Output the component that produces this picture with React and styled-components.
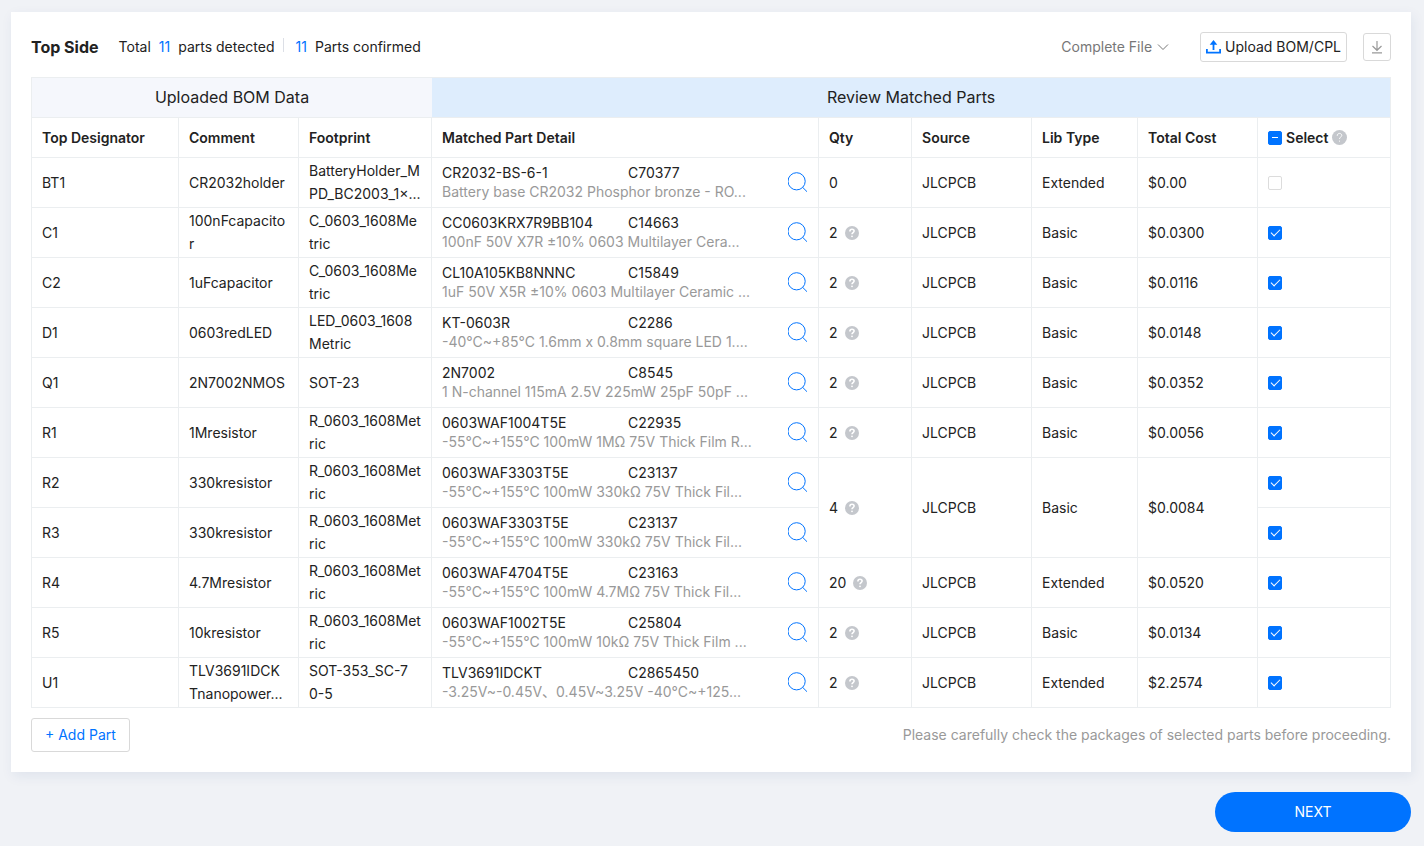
import { useState } from "react"
import styled, { createGlobalStyle } from "styled-components"

const GlobalStyle = createGlobalStyle`
  * {
    box-sizing: border-box;
  }

  body {
    margin: 0;
    background: #f0f2f6;
    color: #222222;
    font-family: Inter, "Noto Sans CJK SC", sans-serif;
    font-size: 14px;
    line-height: 20px;
  }

  button, select, input {
    font: inherit;
  }
`

const Page = styled.main`
  max-width: 1424px;
  margin: 0 auto;
  padding: 12px 13px 14px 11px;
`

const Panel = styled.section`
  background: #ffffff;
  padding: 20px;
  box-shadow: 2px 4px 12px rgba(30, 70, 130, 0.08);
`

const PanelHeader = styled.header`
  display: flex;
  align-items: center;
  margin-bottom: 15px;
`

const Title = styled.h1`
  margin: 0 20px 0 0;
  font-size: 16px;
  font-weight: 700;
`

const Summary = styled.div`
  display: flex;
  align-items: center;
  gap: 8px;
  flex: 1;
`

const Count = styled.span`
  color: #0073ff;
`

const Divider = styled.span`
  width: 1px;
  height: 14px;
  margin-right: 4px;
  margin-bottom: 4px;
  background: #dcdfe6;
`

const FileMenu = styled.label`
  display: flex;
  align-items: center;
  gap: 5px;
  margin-right: 31px;
  color: #777777;

  select {
    appearance: none;
    field-sizing: content;
    border: none;
    padding: 0;
    background: none;
    color: inherit;
    cursor: pointer;
  }
`

const OutlineButton = styled.button`
  display: flex;
  align-items: center;
  justify-content: center;
  gap: 4px;
  height: ${({ $height }) => $height}px;
  padding: 0 ${({ $pad }) => $pad}px;
  border: 1px solid #d9d9d9;
  border-radius: 3px;
  background: #ffffff;
  color: ${({ $color }) => $color || "#222222"};
  white-space: nowrap;
  cursor: pointer;
`

const Toolbar = styled.div`
  display: flex;
  align-items: center;
  gap: 16px;
`

const Table = styled.table`
  width: 100%;
  table-layout: fixed;
  border-collapse: separate;
  border-spacing: 0;
  border-top: 1px solid #ebeef0;
  border-left: 1px solid #ebeef0;
`

const Col = styled.col`
  width: ${({ $width }) => $width}px;
`

const GroupHead = styled.th`
  height: 40px;
  padding: 0 10px 1px;
  border-bottom: 1px solid #ebeef0;
  border-right: ${({ $last }) => ($last ? "1px solid #ebeef0" : "none")};
  background: ${({ $matched }) => ($matched ? "#deedfd" : "#f5f7fc")};
  font-size: 16px;
  font-weight: 400;
  text-align: center;
`

const HeadCell = styled.th`
  height: 40px;
  padding: 0 10px;
  border-right: 1px solid #ebeef0;
  border-bottom: 1px solid #ebeef0;
  font-weight: 600;
  text-align: left;
`

const Cell = styled.td`
  height: 50px;
  padding: 0 10px;
  border-right: 1px solid #ebeef0;
  border-bottom: 1px solid #ebeef0;
  line-height: 23px;
`

const WrapCell = styled(Cell)`
  padding-bottom: 1px;
  white-space: pre-line;
  word-break: break-all;
`

const MatchCell = styled(Cell)`
  padding-bottom: 1px;
  line-height: 19px;
`

const Inline = styled.div`
  display: flex;
  align-items: center;
  gap: ${({ $gap }) => $gap}px;
`

const Match = styled.div`
  display: flex;
  align-items: center;
  gap: 36px;
`

const MatchText = styled.div`
  flex: 1;
  min-width: 0;
`

const PartLine = styled.div`
  display: grid;
  grid-template-columns: 3fr 2fr;
`

const Description = styled.div`
  overflow: hidden;
  color: #999999;
  white-space: nowrap;
`

const IconButton = styled.button`
  display: flex;
  padding: 0;
  border: none;
  background: none;
  cursor: pointer;
`

const Checkbox = styled.input.attrs({ type: "checkbox" })`
  appearance: none;
  display: grid;
  place-content: center;
  width: 14px;
  height: 14px;
  margin: 0;
  border: 1px solid #dcdcdc;
  border-radius: 2px;
  background: #ffffff;
  cursor: pointer;

  &:checked, &:indeterminate {
    border-color: #0073ff;
    background: #0073ff;
  }

  &:checked::after {
    content: "";
    width: 4px;
    height: 8px;
    margin-bottom: 2px;
    border: solid #ffffff;
    border-width: 0 1px 1px 0;
    transform: rotate(45deg);
  }

  &:indeterminate::after {
    content: "";
    width: 6px;
    height: 1px;
    margin: 0;
    border: none;
    background: #ffffff;
    transform: none;
  }
`

const PanelFooter = styled.footer`
  display: flex;
  align-items: center;
  justify-content: space-between;
  margin-top: 10px;
  color: #999999;
`

const Actions = styled.div`
  display: flex;
  justify-content: flex-end;
  margin-top: 20px;
`

const NextButton = styled.button`
  width: 196px;
  height: 40px;
  border: none;
  border-radius: 20px;
  background: #0073ff;
  color: #ffffff;
  cursor: pointer;
`

const ChevronIcon = () => (
  <svg width="12" height="12" viewBox="0 0 12 12" fill="none" stroke="#777777" aria-hidden="true">
    <path d="M1 3.5 L6 8.5 L11 3.5" />
  </svg>
)

const UploadIcon = () => (
  <svg width="15" height="14" viewBox="0 0 15 14" fill="#0073ff" aria-hidden="true">
    <path d="M7.5 0 L11.3 4.8 H8.4 V10 H6.6 V4.8 H3.7 Z" />
    <path d="M0 9 H1.8 V11.8 H13.2 V9 H15 V13.6 H0 Z" />
  </svg>
)

const DownloadIcon = () => (
  <svg width="12" height="14" viewBox="0 0 12 14" fill="none" stroke="#999999" strokeWidth="1.2" aria-hidden="true">
    <path d="M6 1 V10 M1.5 6 L6 10.3 L10.5 6 M1 12.8 H11" />
  </svg>
)

const SearchIcon = () => (
  <svg width="20" height="20" viewBox="0 0 20 20" fill="none" stroke="#0073ff" aria-hidden="true">
    <circle cx="8.6" cy="9.3" r="8.6" />
    <path d="M14.6 15.3 L19 19.7" />
  </svg>
)

const HelpIcon = ({ size = 14, weight = 1.6 }) => (
  <svg width={size} height={size} viewBox="0 0 14 14" fill="none" aria-hidden="true">
    <circle cx="7" cy="7" r="7" fill="#c4c7cc" />
    <path
      d="M4.9 5.4 C4.9 4 5.8 3.2 7 3.2 C8.2 3.2 9.1 4 9.1 5.1 C9.1 6.6 7 6.6 7 8.3"
      stroke="#ffffff"
      strokeWidth={weight}
    />
    <circle cx="7" cy="10.3" r={weight / 2 + 0.1} fill="#ffffff" />
  </svg>
)

const columns = [147, 120, 133, 387, 93, 120, 106, 120, 133]

const headings = [
  "Top Designator",
  "Comment",
  "Footprint",
  "Matched Part Detail",
  "Qty",
  "Source",
  "Lib Type",
  "Total Cost",
]

// span is the number of rows that share one order line, 0 for a row already covered by the one above
const parts = [
  { id: "BT1", comment: "CR2032holder", footprint: "BatteryHolder_MPD_BC2003_1×...", name: "CR2032-BS-6-1", code: "C70377", detail: "Battery base CR2032 Phosphor bronze - RO...", qty: 0, lib: "Extended", cost: "$0.00", span: 1 },
  { id: "C1", comment: "100nFcapacitor", footprint: "C_0603_1608Metric", name: "CC0603KRX7R9BB104", code: "C14663", detail: "100nF 50V X7R ±10% 0603 Multilayer Cera...", qty: 2, lib: "Basic", cost: "$0.0300", span: 1 },
  { id: "C2", comment: "1uFcapacitor", footprint: "C_0603_1608Metric", name: "CL10A105KB8NNNC", code: "C15849", detail: "1uF 50V X5R ±10% 0603 Multilayer Ceramic ...", qty: 2, lib: "Basic", cost: "$0.0116", span: 1 },
  { id: "D1", comment: "0603redLED", footprint: "LED_0603_1608Metric", name: "KT-0603R", code: "C2286", detail: "-40°C~+85°C 1.6mm x 0.8mm square LED 1....", qty: 2, lib: "Basic", cost: "$0.0148", span: 1 },
  { id: "Q1", comment: "2N7002NMOS", footprint: "SOT-23", name: "2N7002", code: "C8545", detail: "1 N-channel 115mA 2.5V 225mW 25pF 50pF ...", qty: 2, lib: "Basic", cost: "$0.0352", span: 1 },
  { id: "R1", comment: "1Mresistor", footprint: "R_0603_1608Metric", name: "0603WAF1004T5E", code: "C22935", detail: "-55°C~+155°C 100mW 1MΩ 75V Thick Film R...", qty: 2, lib: "Basic", cost: "$0.0056", span: 1 },
  { id: "R2", comment: "330kresistor", footprint: "R_0603_1608Metric", name: "0603WAF3303T5E", code: "C23137", detail: "-55°C~+155°C 100mW 330kΩ 75V Thick Fil...", qty: 4, lib: "Basic", cost: "$0.0084", span: 2 },
  { id: "R3", comment: "330kresistor", footprint: "R_0603_1608Metric", name: "0603WAF3303T5E", code: "C23137", detail: "-55°C~+155°C 100mW 330kΩ 75V Thick Fil...", span: 0 },
  { id: "R4", comment: "4.7Mresistor", footprint: "R_0603_1608Metric", name: "0603WAF4704T5E", code: "C23163", detail: "-55°C~+155°C 100mW 4.7MΩ 75V Thick Fil...", qty: 20, lib: "Extended", cost: "$0.0520", span: 1 },
  { id: "R5", comment: "10kresistor", footprint: "R_0603_1608Metric", name: "0603WAF1002T5E", code: "C25804", detail: "-55°C~+155°C 100mW 10kΩ 75V Thick Film ...", qty: 2, lib: "Basic", cost: "$0.0134", span: 1 },
  { id: "U1", comment: "TLV3691IDCKTnanopower...", footprint: "SOT-353_SC-7\n0-5", name: "TLV3691IDCKT", code: "C2865450", detail: "-3.25V~-0.45V、0.45V~3.25V -40°C~+125...", qty: 2, lib: "Extended", cost: "$2.2574", span: 1 },
]

export default function App() {
  const [selected, setSelected] = useState(parts.filter((p) => p.qty !== 0).map((p) => p.id))

  const allSelected = selected.length === parts.length
  const someSelected = selected.length > 0 && !allSelected

  const toggle = (id) => {
    setSelected((prev) => (prev.includes(id) ? prev.filter((x) => x !== id) : [...prev, id]))
  }

  const toggleAll = () => setSelected(allSelected ? [] : parts.map((p) => p.id))

  return (
    <>
      <GlobalStyle />
      <Page>
        <Panel>
          <PanelHeader>
            <Title>Top Side</Title>
            <Summary>
              <span>Total</span>
              <Count>11</Count>
              <span>parts detected</span>
              <Divider />
              <Count>11</Count>
              <span>Parts confirmed</span>
            </Summary>
            <FileMenu>
              <select aria-label="File" defaultValue="complete">
                <option value="complete">Complete File</option>
              </select>
              <ChevronIcon />
            </FileMenu>
            <Toolbar>
              <OutlineButton type="button" $height={30} $pad={5}>
                <UploadIcon />
                Upload BOM/CPL
              </OutlineButton>
              <OutlineButton type="button" $height={28} $pad={7} aria-label="Download">
                <DownloadIcon />
              </OutlineButton>
            </Toolbar>
          </PanelHeader>

          <Table>
            <colgroup>
              {columns.map((width, i) => (
                <Col key={i} $width={width} />
              ))}
            </colgroup>
            <thead>
              <tr>
                <GroupHead colSpan={3}>Uploaded BOM Data</GroupHead>
                <GroupHead colSpan={6} $matched $last>
                  Review Matched Parts
                </GroupHead>
              </tr>
              <tr>
                {headings.map((heading) => (
                  <HeadCell key={heading}>{heading}</HeadCell>
                ))}
                <HeadCell>
                  <Inline $gap={4}>
                    <Checkbox
                      id="select-all"
                      checked={allSelected}
                      ref={(el) => {
                        if (el) el.indeterminate = someSelected
                      }}
                      onChange={toggleAll}
                    />
                    <label htmlFor="select-all">Select</label>
                    <HelpIcon size={15} weight={0.9} />
                  </Inline>
                </HeadCell>
              </tr>
            </thead>
            <tbody>
              {parts.map((part) => (
                <tr key={part.id}>
                  <Cell>{part.id}</Cell>
                  <WrapCell>{part.comment}</WrapCell>
                  <WrapCell>{part.footprint}</WrapCell>
                  <MatchCell>
                    <Match>
                      <MatchText>
                        <PartLine>
                          <span>{part.name}</span>
                          <span>{part.code}</span>
                        </PartLine>
                        <Description>{part.detail}</Description>
                      </MatchText>
                      <IconButton type="button" aria-label={`Search ${part.id}`}>
                        <SearchIcon />
                      </IconButton>
                    </Match>
                  </MatchCell>
                  {part.span > 0 && (
                    <>
                      <Cell rowSpan={part.span}>
                        <Inline $gap={7}>
                          {part.qty}
                          {part.qty > 0 && <HelpIcon />}
                        </Inline>
                      </Cell>
                      <Cell rowSpan={part.span}>JLCPCB</Cell>
                      <Cell rowSpan={part.span}>{part.lib}</Cell>
                      <Cell rowSpan={part.span}>{part.cost}</Cell>
                    </>
                  )}
                  <Cell>
                    <Checkbox
                      aria-label={`Select ${part.id}`}
                      checked={selected.includes(part.id)}
                      onChange={() => toggle(part.id)}
                    />
                  </Cell>
                </tr>
              ))}
            </tbody>
          </Table>

          <PanelFooter>
            <OutlineButton type="button" $height={34} $pad={13} $color="#0073ff">
              + Add Part
            </OutlineButton>
            <span>Please carefully check the packages of selected parts before proceeding.</span>
          </PanelFooter>
        </Panel>

        <Actions>
          <NextButton type="button">NEXT</NextButton>
        </Actions>
      </Page>
    </>
  )
}
